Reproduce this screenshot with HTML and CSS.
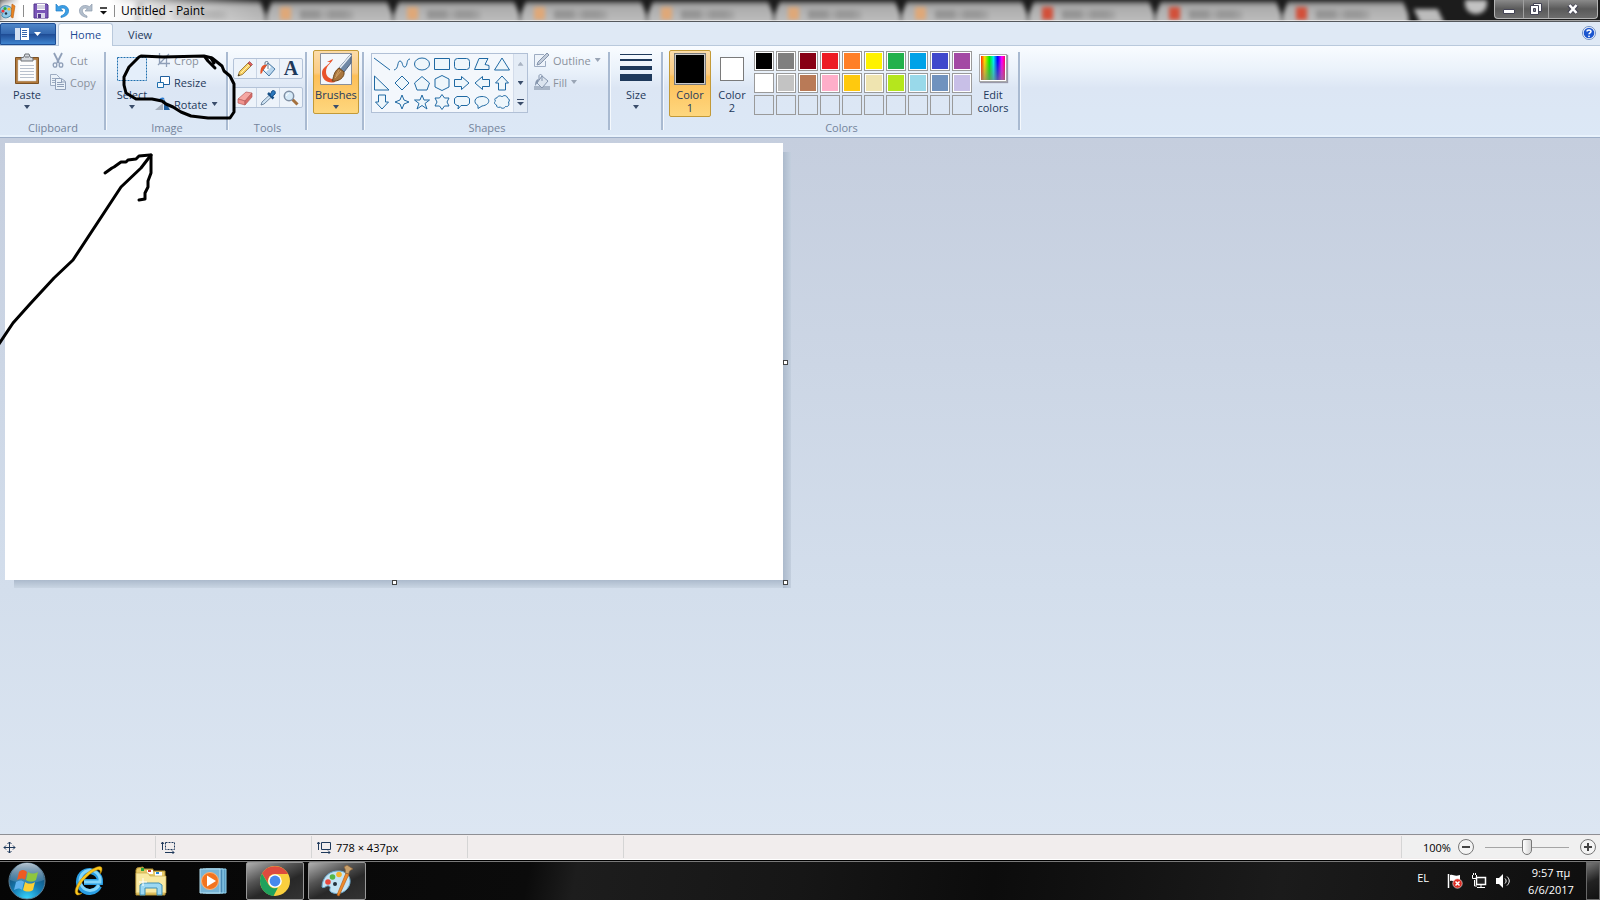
FILE: index.html
```html
<!DOCTYPE html>
<html lang="en">
<head>
  <meta charset="utf-8">
  <meta name="viewport" content="width=device-width, initial-scale=1.0">
  <title>Untitled - Paint</title>
  <link rel="stylesheet" href="styles.css">
</head>
<body>
  <!-- Title bar -->
  <header class="titlebar">
    <div class="glass" aria-hidden="true">
      <i class="tab-behind"></i>
      <i class="tab-behind orange"></i>
      <i class="tab-behind orange"></i>
      <i class="tab-behind orange"></i>
      <i class="tab-behind orange"></i>
      <i class="tab-behind orange"></i>
      <i class="tab-behind orange"></i>
      <i class="tab-behind red"></i>
      <i class="tab-behind red"></i>
      <i class="tab-behind red"></i>
      <i class="new-tab"></i>
      <i class="user-behind"></i>
    </div>
    <div class="quick">
      <svg class="app-icon" width="16" height="16" viewBox="0 0 16 16"><path d="M0 8C0 4 4 2 8 3s6 5 4 8-6 5-9 3 1-3-1-4-2-1-2-2z" fill="#8fc9e8" stroke="#3f86ab"/><circle cx="3" cy="8" r="1.600" fill="#e33"/><circle cx="5" cy="5.500" r="1.600" fill="#3a3"/><circle cx="9" cy="6" r="1.600" fill="#fb2"/><circle cx="6" cy="10.500" r="1.200" fill="#234"/><path d="M12 1l3 2-2 12-2-1z" fill="#e98422" stroke="#b75e12" stroke-width=".6"/></svg>
      <span class="bar"></span>
      <button aria-label="Save"><svg width="16" height="16" viewBox="0 0 16 16"><path d="M1 1h13l1 1v13H1z" fill="#7a55b8" stroke="#53378c"/><path d="M4 1h8v6H4z" fill="#fff"/><path d="M4 3h8M4 5h8" stroke="#a9a4c4"/><path d="M4 10h8v5H4z" fill="#d8d4ea"/><path d="M5 11h3v4H5z" fill="#53378c"/></svg></button>
      <button aria-label="Undo"><svg width="16" height="16" viewBox="0 0 16 16"><path d="M1 1v7h7L5.500 5.700C9 4 11 6 10.500 8.500S8 12 6 13v1.500c5-1 8-3.500 7.500-7.500S8 1 3.500 3.700z" fill="#3b9fe6" stroke="#1f7cc4" stroke-width=".7"/></svg></button>
      <button aria-label="Redo"><svg width="16" height="16" viewBox="0 0 16 16"><path d="M15 1v7H8l2.500-2.300C7 4 5 6 5.500 8.500S8 12 10 13v1.500c-5-1-8-3.500-7.500-7.500S8 1 12.500 3.700z" fill="#b3bfcd" stroke="#8e9bad" stroke-width=".7"/></svg></button>
      <button aria-label="Customize Quick Access Toolbar"><svg width="9" height="8" viewBox="0 0 9 8"><path d="M1 1h7" stroke="#111" stroke-width="1.500"/><path d="M1 4h7L4.500 7.500z" fill="#111"/></svg></button>
      <span class="bar"></span>
      <span class="window-title">Untitled - Paint</span>
    </div>
    <div class="window-buttons">
      <button class="min" aria-label="Minimize"><svg width="14" height="14" viewBox="0 0 14 14"><path d="M1.500 7.500h11v4h-11z" fill="#fff" stroke="#445"/></svg></button>
      <button class="max" aria-label="Restore"><svg width="14" height="14" viewBox="0 0 14 14"><path d="M4.500 1.500h8v8h-8z" fill="#fff" stroke="#445"/><path d="M1.500 3.500h8v9h-8z" fill="#fff" stroke="#445"/><path d="M4.500 6.500h2v3h-2z" fill="#889" stroke="#445"/></svg></button>
      <button class="close" aria-label="Close"><svg width="14" height="14" viewBox="0 0 14 14"><path d="M3 3l8 8M11 3l-8 8" stroke="#445" stroke-width="4.500"/><path d="M3.500 3l7 8M10.500 3l-7 8" stroke="#fff" stroke-width="2.600"/></svg></button>
    </div>
  </header>

  <!-- Ribbon tabs -->
  <nav class="tabs">
    <button class="file-button" aria-label="Paint menu">
      <svg width="14" height="12" viewBox="0 0 14 12"><path d="M0 0h14v12H0z" fill="#fff"/><path d="M5.500 0v12" stroke="#3566ad"/><path d="M7 2.500h5M7 4.500h5M7 6.500h5M7 8.500h5" stroke="#3566ad"/><path d="M0 0h5v12H0z" fill="#d5e1f2"/></svg>
      <svg width="7" height="4" viewBox="0 0 7 4"><path d="M0 0h7L3.500 4z" fill="#fff"/></svg>
    </button>
    <a class="tab active" href="#home">Home</a>
    <a class="tab" href="#view">View</a>
    <button class="help" aria-label="Help"><svg width="14" height="14" viewBox="0 0 14 14"><circle cx="7" cy="7" r="6.500" fill="#fff" stroke="#6b8cc4"/><circle cx="7" cy="7" r="5.300" fill="#1c56cf"/><path d="M5 5.500C5 3.500 9 3.300 9 5.500c0 1.300-2 1.300-2 2.800" fill="none" stroke="#fff" stroke-width="1.500"/><circle cx="7" cy="10.300" r=".9" fill="#fff"/></svg></button>
  </nav>

  <!-- Ribbon -->
  <section class="ribbon" id="home">
    <div class="group clipboard">
      <div class="group-body">
        <button class="big">
          <svg width="26" height="32" viewBox="0 0 26 32"><path d="M1.500 4.500h23v26h-23z" fill="#b0793c" stroke="#7d5122"/><path d="M4 7h18v21H4z" fill="#fdfdfd" stroke="#c9c9c9" stroke-width=".5"/><path d="M6 12.500h14M6 15.500h14M6 18.500h14M6 21.500h14M6 24.500h14" stroke="#b9c1cd"/><path d="M7 8V5l3-1 1-3h4l1 3 3 1v3z" fill="#d5d9de" stroke="#6c7177"/><path d="M11 4h4" stroke="#6c7177"/></svg>
          <span>Paste</span><i class="arrow"></i>
        </button>
        <div class="stack">
          <button class="row disabled"><svg width="16" height="16" viewBox="0 0 16 16"><path d="M4 1l5 10M12 1L7 11" stroke="#8f9fb8" stroke-width="1.800"/><ellipse cx="5" cy="13" rx="1.800" ry="2.200" fill="none" stroke="#8f9fb8" stroke-width="1.300"/><ellipse cx="11" cy="13" rx="1.800" ry="2.200" fill="none" stroke="#8f9fb8" stroke-width="1.300"/></svg>Cut</button>
          <button class="row disabled"><svg width="16" height="16" viewBox="0 0 16 16"><path d="M.5.500h6l3 3v8h-9z" fill="#eaf1f9" stroke="#9dacc2"/><path d="M2 4.500h4M2 6.500h4M2 8.500h4" stroke="#9dacc2"/><path d="M5.500 4.500h6l4 3v8h-10z" fill="#eaf1f9" stroke="#8f9fb8"/><path d="M7 8.500h5M7 10.500h7M7 12.500h7M11.500 5v3H15" stroke="#8f9fb8" fill="none"/></svg>Copy</button>
        </div>
      </div>
      <h2>Clipboard</h2>
    </div>

    <div class="group image">
      <div class="group-body">
        <button class="big">
          <svg width="32" height="32" viewBox="0 0 32 32"><path d="M1.500 4.500h29v23h-29z" fill="#e4eefa" stroke="#1e6fae" stroke-dasharray="2 1"/></svg>
          <span>Select</span><i class="arrow"></i>
        </button>
        <div class="stack">
          <button class="row disabled"><svg width="16" height="16" viewBox="0 0 16 16"><path d="M4.500 1v10.500H15M1 4.500h10.500V15M3 13L14 2" fill="none" stroke="#8f9fb8" stroke-width="1.300"/></svg>Crop</button>
          <button class="row"><svg width="16" height="16" viewBox="0 0 16 16"><path d="M5.500 2.500h9v8h-9z" fill="#fff" stroke="#1f5f9e"/><path d="M2.500 8.500h6v5h-6z" fill="#f2f8fd" stroke="#1e6fae"/></svg>Resize</button>
          <button class="row"><svg width="16" height="16" viewBox="0 0 16 16"><path d="M0 14h8V7z" fill="#a6afbc"/><path d="M9 14V3l6 11z" fill="#1f5fa0"/><path d="M4 5c1-2 3-3 5-2" stroke="#2a7bd0" stroke-width="2" fill="none"/></svg>Rotate<i class="arrow"></i></button>
        </div>
      </div>
      <h2>Image</h2>
    </div>

    <div class="group tools">
      <div class="group-body tool-rows">
        <div class="tool-row">
          <button aria-label="Pencil"><svg width="16" height="16" viewBox="0 0 16 16"><path d="M1 15l1.500-4.500L11 2l3 3-8.500 8.500z" fill="#f6cf62" stroke="#8b6a2a" stroke-width=".8"/><path d="M11 2l1.500-1.500 3 3L14 5z" fill="#e0605c" stroke="#8b3a3a" stroke-width=".6"/><path d="M1 15l.7-2 1.300 1.300z" fill="#222"/><path d="M4 12l8-8" stroke="#fff2b5"/></svg></button>
          <button aria-label="Fill with color"><svg width="16" height="16" viewBox="0 0 16 16"><path d="M8 2l7 6-6 7-6-6z" fill="#b9d6ee" stroke="#4b7ba5"/><path d="M8 3l3 3-5 5-2-2z" fill="#fff"/><path d="M8 8V1.500C8-.2 5-.2 5 2v3" fill="none" stroke="#667a8c"/><path d="M7 4C3 3 0 6 .5 13c2 0 2-4 3.500-5z" fill="#e4552a"/></svg></button>
          <button aria-label="Text" class="letter">A</button>
        </div>
        <div class="tool-row">
          <button aria-label="Eraser"><svg width="16" height="16" viewBox="0 0 16 16"><path d="M1 9l8-7 6 1-7 8z" fill="#f5a7a2" stroke="#b75d5b" stroke-width=".7"/><path d="M1 9l7 2v4l-7-2z" fill="#f0938d" stroke="#b75d5b" stroke-width=".7"/><path d="M8 11l7-8v4l-7 8z" fill="#d76b66" stroke="#b75d5b" stroke-width=".7"/></svg></button>
          <button aria-label="Color picker"><svg width="16" height="16" viewBox="0 0 16 16"><path d="M9.500 5l2 2L4 14l-3 1 1-3z" fill="#cfe4f4" stroke="#56708d" stroke-width=".8"/><path d="M8 3l5.500 5.500" stroke="#174f86" stroke-width="2.500"/><path d="M10 5l2-4c2-1.500 4 .5 3 3l-3.500 3z" fill="#2b78bd" stroke="#174f86"/></svg></button>
          <button aria-label="Magnifier"><svg width="16" height="16" viewBox="0 0 16 16"><path d="M9.500 9.500l5 5" stroke="#a4703d" stroke-width="3"/><circle cx="6" cy="6" r="4.700" fill="#d5e9f7" stroke="#7f8fa3" stroke-width="1.500"/><path d="M3.500 6C3.500 4 5 3.500 6 3.500" stroke="#fff" fill="none"/></svg></button>
        </div>
      </div>
      <h2>Tools</h2>
    </div>

    <div class="group brushes">
      <div class="group-body">
        <button class="big picked">
          <svg width="32" height="32" viewBox="0 0 32 32"><path d="M.5.500h31v31H.5z" fill="#f2f6fb" stroke="#8a8f99"/><path d="M13 6C12 10 6 12 6 19c0 5 5 8 10 7l-1 3C8 31 2 27 2 20c0-6 6-7 8-11L7 9z" fill="#e9532b"/><path d="M31 1v9l-7 9-5-4z" fill="#6f88a6" stroke="#4c5f7a"/><path d="M31 2L20 15" stroke="#e8eff7" stroke-width="1.500"/><path d="M19 15l5 4c1 5-5 10-12 9 2-3 1-9 7-13z" fill="#a9763e" stroke="#71481c"/><path d="M21 18l-6 7M19 17l-3 6" stroke="#d3a468"/></svg>
          <span>Brushes</span><i class="arrow"></i>
        </button>
      </div>
    </div>

    <div class="group shapes">
      <div class="group-body">
        <div class="gallery">
          <div class="shape-grid">
            <button aria-label="Line"><svg viewBox="0 0 16 16"><path d="M0 2l16 12"/></svg></button>
            <button aria-label="Curve"><svg viewBox="0 0 16 16"><path d="M0 14c5-1 3-9 6-9s2 7 5 6 1-8 5-8" fill="none"/></svg></button>
            <button aria-label="Oval"><svg viewBox="0 0 16 16"><ellipse cx="8" cy="8" rx="7.500" ry="6"/></svg></button>
            <button aria-label="Rectangle"><svg viewBox="0 0 16 16"><path d="M.5 2.500h15v11H.5z"/></svg></button>
            <button aria-label="Rounded rectangle"><svg viewBox="0 0 16 16"><rect x=".5" y="2.500" width="15" height="11" rx="3"/></svg></button>
            <button aria-label="Polygon"><svg viewBox="0 0 16 16"><path d="M5 2.500h9l-3 6 4 1v4H.5z"/></svg></button>
            <button aria-label="Triangle"><svg viewBox="0 0 16 16"><path d="M8 2l7.500 12H.5z"/></svg></button>
            <button aria-label="Right triangle"><svg viewBox="0 0 16 16"><path d="M.5 1v14H15z"/></svg></button>
            <button aria-label="Diamond"><svg viewBox="0 0 16 16"><path d="M8 1l7 7-7 7-7-7z"/></svg></button>
            <button aria-label="Pentagon"><svg viewBox="0 0 16 16"><path d="M8 1.500L15.500 8 13 15H3L.5 8z"/></svg></button>
            <button aria-label="Hexagon"><svg viewBox="0 0 16 16"><path d="M8 .5L15 4v8l-7 3.500L1 12V4z"/></svg></button>
            <button aria-label="Right arrow"><svg viewBox="0 0 16 16"><path d="M.5 4.500h7v-3L15 8l-7.500 6.500v-3h-7z"/></svg></button>
            <button aria-label="Left arrow"><svg viewBox="0 0 16 16"><path d="M15.500 4.500h-7v-3L1 8l7.500 6.500v-3h7z"/></svg></button>
            <button aria-label="Up arrow"><svg viewBox="0 0 16 16"><path d="M4.500 15V8h-3L8 1l6.500 7h-3v7z"/></svg></button>
            <button aria-label="Down arrow"><svg viewBox="0 0 16 16"><path d="M4.500 1v7h-3L8 15l6.500-7h-3V1z"/></svg></button>
            <button aria-label="Four-point star"><svg viewBox="0 0 16 16"><path d="M8 1l2 5 5 2-5 2-2 5-2-5-5-2 5-2z"/></svg></button>
            <button aria-label="Five-point star"><svg viewBox="0 0 16 16"><path d="M8 1l2 5h5.500L11 9.500l2 5.500-5-3.500L3 15l2-5.500L.5 6H6z"/></svg></button>
            <button aria-label="Six-point star"><svg viewBox="0 0 16 16"><path d="M8 .5L10.500 4H15l-2 4 2 4h-4.500L8 15.500 5.500 12H1l2-4-2-4h4.500z"/></svg></button>
            <button aria-label="Rounded callout"><svg viewBox="0 0 16 16"><path d="M3 2.500h10l2.500 2v5l-2.500 2H7L4 15l.5-3.500H3l-2.500-2v-5z"/></svg></button>
            <button aria-label="Oval callout"><svg viewBox="0 0 16 16"><path d="M4 11.500C-1 9 0 2.500 8 2.500s10 8 0 9.500l-4 2.500z"/></svg></button>
            <button aria-label="Cloud callout"><svg viewBox="0 0 16 16"><path d="M3 4c0-2 4-3 5-1 1-2 5-2 5.500 1 2 1 2.500 3 1 4 1 3 0 5-3 4.500-1 2-4 2.500-5 .5-3 1-4 0-4-2C0 10 0 8 1.500 7 0 5 1 4 3 4z"/></svg></button>
          </div>
          <div class="gallery-scroll">
            <button aria-label="Scroll up"><i class="arrow up"></i></button>
            <button aria-label="Scroll down"><i class="arrow"></i></button>
            <button aria-label="More shapes"><svg width="7" height="7" viewBox="0 0 7 7"><path d="M0 .5h7" stroke="#3a4d6b"/><path d="M0 3h7L3.500 6.500z" fill="#3a4d6b"/></svg></button>
          </div>
        </div>
        <div class="stack">
          <button class="row disabled"><svg width="16" height="16" viewBox="0 0 16 16"><path d="M10 2.500H.5v12h11V9" fill="#edf3fa" stroke="#9dacc2"/><path d="M3 13l1-3 9-9 2 2-9 9z" fill="#c3cddb" stroke="#8595ad"/></svg>Outline<i class="arrow"></i></button>
          <button class="row disabled"><svg width="16" height="16" viewBox="0 0 16 16"><path d="M0 12h16v4H0z" fill="#a9b6c8"/><path d="M8 2l6 5-6 7-5-5z" fill="#dbe4ef" stroke="#8595ad"/><path d="M8 7V2C8 0 5 0 5 2v3" fill="none" stroke="#8595ad"/><path d="M5 5C2 5 1 8 1 12l3-4z" fill="#8595ad"/></svg>Fill<i class="arrow"></i></button>
        </div>
      </div>
      <h2>Shapes</h2>
    </div>

    <div class="group size">
      <div class="group-body">
        <button class="big">
          <svg width="32" height="32" viewBox="0 0 32 32"><path d="M0 1h32v1H0zM0 6h32v2H0zM0 13h32v4H0zM0 21h32v7H0z" fill="#1e395b"/></svg>
          <span>Size</span><i class="arrow"></i>
        </button>
      </div>
    </div>

    <div class="group colors">
      <div class="group-body">
        <button class="big picked color-slot"><i class="swatch large black"></i><span>Color<br>1</span></button>
        <button class="big color-slot"><i class="swatch medium white"></i><span>Color<br>2</span></button>
        <div class="palette">
          <button class="swatch black" aria-label="Black"></button>
          <button class="swatch gray-50" aria-label="Gray-50%"></button>
          <button class="swatch dark-red" aria-label="Dark red"></button>
          <button class="swatch red" aria-label="Red"></button>
          <button class="swatch orange" aria-label="Orange"></button>
          <button class="swatch yellow" aria-label="Yellow"></button>
          <button class="swatch green" aria-label="Green"></button>
          <button class="swatch turquoise" aria-label="Turquoise"></button>
          <button class="swatch indigo" aria-label="Indigo"></button>
          <button class="swatch purple" aria-label="Purple"></button>
          <button class="swatch white" aria-label="White"></button>
          <button class="swatch gray-25" aria-label="Gray-25%"></button>
          <button class="swatch brown" aria-label="Brown"></button>
          <button class="swatch rose" aria-label="Rose"></button>
          <button class="swatch gold" aria-label="Gold"></button>
          <button class="swatch light-yellow" aria-label="Light yellow"></button>
          <button class="swatch lime" aria-label="Lime"></button>
          <button class="swatch light-turquoise" aria-label="Light turquoise"></button>
          <button class="swatch blue-gray" aria-label="Blue-gray"></button>
          <button class="swatch lavender" aria-label="Lavender"></button>
          <button class="swatch empty" aria-label="Custom 1"></button>
          <button class="swatch empty" aria-label="Custom 2"></button>
          <button class="swatch empty" aria-label="Custom 3"></button>
          <button class="swatch empty" aria-label="Custom 4"></button>
          <button class="swatch empty" aria-label="Custom 5"></button>
          <button class="swatch empty" aria-label="Custom 6"></button>
          <button class="swatch empty" aria-label="Custom 7"></button>
          <button class="swatch empty" aria-label="Custom 8"></button>
          <button class="swatch empty" aria-label="Custom 9"></button>
          <button class="swatch empty" aria-label="Custom 10"></button>
        </div>
        <button class="big edit-colors"><i class="spectrum"></i><span>Edit<br>colors</span></button>
      </div>
      <h2>Colors</h2>
    </div>
  </section>

  <!-- Drawing area -->
  <main class="workspace">
    <div class="canvas">
      <i class="handle right"></i>
      <i class="handle bottom"></i>
      <i class="handle corner"></i>
    </div>
  </main>

  <!-- Status bar -->
  <footer class="status">
    <div class="cell"><svg width="13" height="13" viewBox="0 0 13 13"><path d="M6.500 1v11M1 6.500h11M4.500 3l2-2 2 2M4.500 10l2 2 2-2M3 4.500l-2 2 2 2M10 4.500l2 2-2 2" fill="none" stroke="#1e395b"/></svg></div>
    <div class="cell"><svg width="14" height="13" viewBox="0 0 14 13"><path d="M1.500 9V1M0 3l1.500-2L3 3M4 11.500h9M11 9.500l2 2-2 2" fill="none" stroke="#1e395b"/><path d="M4.500 1.500h9v7h-9z" fill="none" stroke="#1e395b" stroke-dasharray="2 1"/></svg></div>
    <div class="cell"><svg width="14" height="13" viewBox="0 0 14 13"><path d="M1.500 9V1M0 3l1.500-2L3 3M4 11.500h9M11 9.500l2 2-2 2M4.500 1.500h9v7h-9z" fill="none" stroke="#1e395b"/></svg><span>778 × 437px</span></div>
    <div class="cell"></div>
    <div class="cell wide"></div>
    <div class="zoom">
      <label for="zoom">100%</label>
      <button aria-label="Zoom out"><svg width="16" height="16" viewBox="0 0 16 16"><circle cx="8" cy="8" r="7.500" fill="#f4f4f4" stroke="#777"/><path d="M4 8h8" stroke="#444" stroke-width="2"/></svg></button>
      <input type="range" id="zoom" min="0" max="100" value="50">
      <button aria-label="Zoom in"><svg width="16" height="16" viewBox="0 0 16 16"><circle cx="8" cy="8" r="7.500" fill="#f4f4f4" stroke="#777"/><path d="M4 8h8M8 4v8" stroke="#444" stroke-width="2"/></svg></button>
    </div>
  </footer>

  <!-- Taskbar -->
  <div class="taskbar">
    <button class="start" aria-label="Start">
      <svg width="38" height="38" viewBox="0 0 38 38">
        <defs>
          <radialGradient id="orb" cx=".5" cy="1" r=".95"><stop offset="0" stop-color="#39d8ff"/><stop offset=".45" stop-color="#157db5"/><stop offset="1" stop-color="#123a5c"/></radialGradient>
          <linearGradient id="gloss" x2="0" y2="1"><stop offset="0" stop-color="#dfe9f0" stop-opacity=".8"/><stop offset="1" stop-color="#9dbdd2" stop-opacity=".2"/></linearGradient>
        </defs>
        <circle cx="19" cy="19" r="18" fill="url(#orb)" stroke="#5d7f95"/>
        <path d="M2 18a17 17 0 0 1 34 0c-9 4-25 4-34 0z" fill="url(#gloss)"/>
        <path d="M11 10c3-3 6-2 8 0l-2 8c-2-2-5-2-8 0z" fill="#ee5a22"/>
        <path d="M20 10c3 2 6 2 10 0l-2 8c-3 2-7 2-10 0z" fill="#8fc63e"/>
        <path d="M8 20c3-2 6-2 8 0l-2 8c-2-2-5-2-8 0z" fill="#5fb2ee"/>
        <path d="M17 20c3 2 7 2 10 0l-2 8c-3 2-7 2-10 0z" fill="#fdcf35"/>
      </svg>
    </button>
    <button class="task" aria-label="Internet Explorer">
      <svg width="32" height="32" viewBox="0 0 32 32"><path d="M26 21a10.500 10.500 0 1 1 1-4H11" fill="none" stroke="#2a9ee3" stroke-width="6"/><path d="M26 20a10 10 0 1 1 1-3H11" fill="none" stroke="#84d6fa" stroke-width="3"/><path d="M4 30c-5-3 1-14 9-21S29-1 29 4c0 2-1 4-2 5 1-3 0-5-3-4C17 7 6 19 5 25c-1 3 1 4 4 3-2 2-4 2-5 2z" fill="#fbc81e" stroke="#b98308" stroke-width=".5"/></svg>
    </button>
    <button class="task" aria-label="Windows Explorer">
      <svg width="32" height="32" viewBox="0 0 32 32"><path d="M2 3l6-1 1 2h9v2h12v24H1V5z" fill="#e8cb69" stroke="#b08f33"/><path d="M6 3h3v3H6z" fill="#27a53d"/><path d="M12 5h6v4h-6z" fill="#fff"/><path d="M13 5h3v2h-3z" fill="#d5402e"/><path d="M20 7h7v4h-7z" fill="#fff"/><path d="M21 7h3v2h-3z" fill="#2789d8"/><path d="M1 8h12l2 3h16v17H1z" fill="#f9e9a2" stroke="#c9aa4c" stroke-width=".7"/><path d="M5 30V20l3-2h16l3 2v10h-5v-7H10v7z" fill="#9cd8f2" stroke="#3f8fb5"/><path d="M8 13v8M4 17h8" stroke="#fff"/></svg>
    </button>
    <button class="task" aria-label="Windows Media Player">
      <svg width="32" height="32" viewBox="0 0 32 32"><path d="M9 4h20v24H9z" fill="#5b9dc4" stroke="#8fd0ee"/><path d="M6 4h20v24H6z" fill="#4889b4" stroke="#9ad9f4"/><path d="M3 4h20v24H3z" fill="#78b5d6" stroke="#b4e0f3"/><circle cx="13" cy="16" r="8.500" fill="#f2741f" stroke="#fbb57a"/><path d="M10 10.500v11l9-5.500z" fill="#fff"/></svg>
    </button>
    <button class="task open" aria-label="Google Chrome">
      <svg width="32" height="32" viewBox="0 0 32 32"><circle cx="16" cy="16" r="15" fill="#f9cf3e"/><path d="M3 8.500A15 15 0 0 1 29 9H16a7 7 0 0 0-6.500 10z" fill="#dd4b3e"/><path d="M3 8.500l6.500 11A7 7 0 0 0 19 22.500L14.500 31A15 15 0 0 1 3 8.500z" fill="#1fa15d"/><circle cx="16" cy="16" r="6.800" fill="#fff"/><circle cx="16" cy="16" r="5.400" fill="#4789ec"/></svg>
    </button>
    <button class="task open" aria-label="Paint">
      <svg width="32" height="32" viewBox="0 0 32 32"><path d="M1 22C1 12 9 5 19 6c9 1 12 9 9 15-4 8-13 9-18 6-3-2 1-5-2-6s-4 3-7 1z" fill="#c4e4f5" stroke="#6aa8cb"/><circle cx="7" cy="17" r="2.800" fill="#e8483c"/><circle cx="11.500" cy="12" r="2.800" fill="#54b848"/><circle cx="18" cy="9.500" r="2.800" fill="#f7b52c"/><circle cx="14" cy="19" r="2" fill="#23323d"/><path d="M25 8l3 1-10 22-2-1z" fill="#ef8b2c" stroke="#b5601a" stroke-width=".7"/><path d="M23 2l3-2 6 4c-2 1-4 1-4 5l-4-1c1-3 0-4-1-6z" fill="#c9a06b" stroke="#86603a" stroke-width=".7"/></svg>
    </button>

    <div class="tray">
      <span class="lang">EL</span>
      <svg width="16" height="16" viewBox="0 0 16 16"><path d="M1.500 1v14" stroke="#fff" stroke-width="1.500"/><path d="M3 2c4-1 4 2 10 0v6C8 10 7 7 3 8z" fill="#fff"/><circle cx="10.500" cy="10.500" r="4.700" fill="#d92b22" stroke="#fff" stroke-width=".6"/><path d="M8.500 8.500l4 4M12.500 8.500l-4 4" stroke="#fff" stroke-width="1.500"/></svg>
      <svg width="16" height="16" viewBox="0 0 16 16"><path d="M5.500 4.500h9v7h-9z" fill="#222" stroke="#fff" stroke-width="1.500"/><path d="M6 14.500h8M10 12v2M3.500 7v6H6M1.500 2v3.500h4V2M2.500 0v2M4.500 0v2" fill="none" stroke="#fff"/></svg>
      <svg width="16" height="16" viewBox="0 0 16 16"><path d="M1 5h3l4-4v14l-4-4H1z" fill="#fff"/><path d="M10 5.500c1.500 1.500 1.500 3.500 0 5M12 3.500c3 3 3 6 0 9" fill="none" stroke="#fff"/></svg>
      <div class="clock">9:57 πμ<br>6/6/2017</div>
      <button class="show-desktop" aria-label="Show desktop"></button>
    </div>
  </div>

  <!-- Hand-drawn circle and arrow -->
  <svg class="ink" width="240" height="350" viewBox="0 0 240 350">
    <path d="M141 56l22 1 41-1 8 2 10 8 2 5 6 5 4 8v28l-4 6h-22l-17-2-10-4-8-5-7-3-4-3-10-2h-16l-10-6-2-8v-8l5-10 5-5 5-5z"/>
    <path d="M205 57l3 4 7 7M211 58l3 5"/>
    <path d="M-1 344l14-21 17-19 24-26 19-18 48-73 20-19 10-13"/>
    <path d="M150 155l-11 1-3 3-8 1-2 2-5 0-7 5-2 1-7 5M151 155v18l-3 8v6l-3 6v6l-6 1"/>
  </svg>
</body>
</html>
```
FILE: styles.css
```css
* {
  box-sizing: border-box;
}

body {
  margin: 0;
  height: 100vh;
  display: flex;
  flex-direction: column;
  overflow: hidden;
  position: relative;
  font-family: "Open Sans", "Noto Sans", sans-serif;
  font-size: 11px;
  line-height: 13px;
  color: #1e395b;
}

button {
  margin: 0;
  padding: 0;
  border: 0;
  background: none;
  font: inherit;
  color: inherit;
}

svg {
  display: block;
  flex: none;
}

/* Title bar */
.titlebar {
  position: relative;
  height: 22px;
  flex: none;
  display: flex;
  justify-content: space-between;
  overflow: hidden;
  background: #1c1c1c;
  border-bottom: 1px solid #55585c;
}

.titlebar::after {
  content: "";
  position: absolute;
  left: 0;
  right: 0;
  bottom: 0;
  height: 1px;
  background: rgba(255, 255, 255, 0.6);
}

/* Blurred browser tabs seen through the glass */
.glass {
  position: absolute;
  inset: 0;
  display: flex;
  padding-left: 139px;
  filter: blur(2px);
}

.glass::before {
  content: "";
  position: absolute;
  left: 0;
  top: 2px;
  width: 135px;
  height: 24px;
  background: #c4c4c4;
}

.tab-behind {
  position: relative;
  width: 127px;
  height: 26px;
  flex: none;
  background: linear-gradient(#444 0, #aaa 6px, #c2c2c2 26px);
  clip-path: polygon(6px 1px, 121px 1px, 126px 14px, 127px 26px, 0 26px, 1px 14px);
}

.tab-behind::before {
  content: "";
  position: absolute;
  left: 14px;
  top: 7px;
  width: 11px;
  height: 13px;
  background: #8f8a84;
}

.tab-behind::after {
  content: "";
  position: absolute;
  left: 34px;
  top: 10px;
  width: 54px;
  height: 9px;
  background: linear-gradient(90deg, #959595 0 18px, #a8a8a8 22px 26px, #989898 30px 44px, #aaa);
}

.tab-behind.orange::before {
  background: #dfa878;
}

.tab-behind.red::before {
  background: #d2503a;
}

.new-tab {
  width: 24px;
  height: 14px;
  margin: 9px 0 0 8px;
  background: #bcbcbc;
  transform: skewX(25deg);
}

.user-behind {
  width: 22px;
  height: 14px;
  margin-left: 24px;
  background: #c2c2c2;
  border-radius: 0 0 10px 10px;
}

.quick {
  position: relative;
  display: flex;
  align-items: center;
  gap: 6px;
  padding-right: 60px;
  background: linear-gradient(90deg, rgba(255, 255, 255, 0.3) 0, #fff 20px, #fff 110px, rgba(255, 255, 255, 0.4) 190px, rgba(255, 255, 255, 0));
}

.app-icon {
  margin-right: 1px;
}

.bar {
  width: 1px;
  height: 12px;
  background: #8c8c8c;
}

.bar + button {
  margin-left: 3px;
}

.window-title {
  font-size: 12px;
  line-height: 16px;
  color: #000;
}

.window-buttons {
  position: relative;
  display: flex;
  height: 19px;
  margin-right: 2px;
  border: 1px solid #b4b4b4;
  border-top: 0;
  border-radius: 0 0 4px 4px;
  background: linear-gradient(#8a8a8a, #5a5a5a 50%, #6d6d6d);
}

.window-buttons button {
  width: 28px;
  display: flex;
  align-items: center;
  justify-content: center;
}

.window-buttons .max {
  width: 26px;
  border: solid #a0a0a0;
  border-width: 0 1px;
}

.window-buttons .close {
  width: 48px;
}

/* Ribbon tabs */
.tabs {
  height: 24px;
  flex: none;
  display: flex;
  align-items: flex-end;
  background: #dfe9f5;
  border-bottom: 1px solid #b9c9dc;
}

.file-button {
  width: 56px;
  height: 22px;
  align-self: flex-start;
  margin: 1px 2px 0 0;
  display: flex;
  align-items: center;
  justify-content: center;
  gap: 5px;
  border: 1px solid #1d4d94;
  border-radius: 2px 2px 0 0;
  background: linear-gradient(#4f86c8, #3468b0 48%, #1e4a93 50%, #3f84cf);
}

.tab {
  height: 23px;
  padding: 4px 11px 0;
  margin-bottom: -1px;
  border: 1px solid transparent;
  border-bottom: 0;
  border-radius: 3px 3px 0 0;
  color: #1e395b;
  text-decoration: none;
}

.tab.active {
  background: #f9fcff;
  border-color: #b9c9dc;
  color: #1d4a94;
}

.tab + .tab {
  margin-left: 3px;
}

.help {
  margin: 0 4px 5px auto;
}

/* Ribbon */
.ribbon {
  height: 92px;
  flex: none;
  display: flex;
  padding-top: 4px;
  background: linear-gradient(#f9fcff, #e9f1fa 26px, #dce6f4 42px, #dce8f6);
  border-bottom: 1px solid #9eafc8;
  box-shadow: inset 0 -2px 0 #e8f2fc;
}

.group {
  position: relative;
  display: flex;
  flex-direction: column;
}

.group::after {
  content: "";
  position: absolute;
  right: -1px;
  top: 2px;
  width: 2px;
  height: 78px;
  background: #a9bad1;
  border-right: 1px solid #f5f9fd;
}

.group-body {
  display: flex;
  align-items: flex-start;
  height: 70px;
}

.group h2 {
  margin: 1px 0 0;
  font-size: 11px;
  line-height: 13px;
  font-weight: normal;
  text-align: center;
  color: #74849c;
}

.clipboard {
  width: 106px;
}

.clipboard .group-body {
  padding-left: 4px;
}

.image {
  width: 122px;
}

.image .group-body {
  padding-left: 3px;
}

.tools {
  width: 79px;
}

.tools .group-body {
  padding-left: 5px;
}

.brushes {
  width: 57px;
}

.brushes .group-body {
  padding-left: 6px;
}

.shapes {
  width: 246px;
}

.shapes .group-body {
  padding-left: 7px;
}

.size {
  width: 53px;
}

.size .group-body {
  padding-left: 3px;
}

.colors {
  width: 357px;
}

.colors .group-body {
  padding-left: 6px;
}

.big {
  width: 46px;
  height: 64px;
  padding-top: 3px;
  display: flex;
  flex-direction: column;
  align-items: center;
  flex: none;
}

.big span {
  margin-top: 3px;
}

.arrow {
  flex: none;
  width: 6px;
  height: 4px;
  background: #3a4d6b;
  clip-path: polygon(0 0, 100% 0, 50% 100%);
}

.arrow.up {
  background: #a9b3c2;
  clip-path: polygon(50% 0, 100% 100%, 0 100%);
}

.big .arrow {
  margin-top: 4px;
}

.picked {
  padding-top: 2px;
  border: 1px solid #c39a38;
  border-radius: 2px;
  background: linear-gradient(#fbdcaa, #fbcb82 35%, #fdbf58 40%, #fed77e);
}

.stack {
  margin-top: -1px;
}

.row {
  height: 22px;
  padding: 0 4px 0 0;
  display: flex;
  align-items: center;
  gap: 3px;
  white-space: nowrap;
}

.row .arrow {
  margin-left: 1px;
}

.clipboard .row {
  gap: 4px;
}

.disabled {
  color: #8a919c;
}

.disabled .arrow {
  background: #9aa5b5;
}

.tool-rows {
  flex-direction: column;
  padding-top: 8px;
  gap: 8px;
}

.tool-row {
  height: 21px;
  display: flex;
  border: 1px solid #b4c3d8;
  border-radius: 2px;
  background: #edf3fa;
}

.tool-row button {
  width: 22px;
  display: flex;
  align-items: center;
  justify-content: center;
}

.tool-row button + button {
  width: 23px;
  border-left: 1px solid #c8d4e4;
}

.tool-row .letter {
  font-family: "Liberation Serif", serif;
  font-size: 20px;
  font-weight: bold;
}

.gallery {
  margin: 3px 6px 0 0;
  height: 60px;
  display: flex;
  border: 1px solid #b1c0d6;
  background: #f3f7fc;
}

.shape-grid {
  display: grid;
  grid-template-columns: repeat(7, 20px);
  grid-auto-rows: 19px;
  width: 141px;
}

.shape-grid button {
  display: flex;
  align-items: center;
  justify-content: center;
}

.shape-grid svg {
  width: 16px;
  height: 16px;
  fill: #eef6fb;
  stroke: #1f69a3;
  stroke-width: 1;
}

.gallery-scroll {
  width: 14px;
  display: flex;
  flex-direction: column;
  border-left: 1px solid #d3dcea;
  background: #e4ecf6;
}

.gallery-scroll button {
  flex: 1;
  display: flex;
  align-items: center;
  justify-content: center;
}

/* Colors */
.color-slot {
  width: 42px;
  height: 67px;
}

.color-slot + .color-slot {
  padding-top: 7px;
}

.color-slot + .color-slot span {
  margin-top: 7px;
}

.swatch {
  width: 20px;
  height: 20px;
  border: 1px solid #9a9a9a;
  box-shadow: inset 0 0 0 1px #fff;
}

.swatch.large {
  width: 32px;
  height: 32px;
  border-color: #7a7a7a;
  box-shadow: inset 0 0 0 1px #c9c9c9;
}

.swatch.medium {
  width: 24px;
  height: 24px;
  border-color: #7a7a7a;
}

.swatch.empty {
  box-shadow: none;
}

.palette {
  margin: 1px 0 0 1px;
  display: grid;
  grid-template-columns: repeat(10, 20px);
  gap: 2px;
}

.black { background: #000; }
.gray-50 { background: #7f7f7f; }
.dark-red { background: #880015; }
.swatch.red { background: #ed1c24; }
.swatch.orange { background: #ff7f27; }
.yellow { background: #fff200; }
.green { background: #22b14c; }
.turquoise { background: #00a2e8; }
.indigo { background: #3f48cc; }
.purple { background: #a349a4; }
.white { background: #fff; }
.gray-25 { background: #c3c3c3; }
.brown { background: #b97a57; }
.rose { background: #ffaec9; }
.gold { background: #ffc90e; }
.light-yellow { background: #efe4b0; }
.lime { background: #b5e61d; }
.light-turquoise { background: #99d9ea; }
.blue-gray { background: #7092be; }
.lavender { background: #c8bfe7; }

.edit-colors {
  width: 42px;
}

.spectrum {
  width: 28px;
  height: 28px;
  margin: 1px 0 3px;
  border: 1px solid #a8a8a8;
  box-shadow: inset 0 0 0 1px #fff, 1px 1px 1px #99a;
  background: linear-gradient(rgba(128, 128, 128, 0) 20%, rgba(128, 128, 128, 0.7)), linear-gradient(90deg, #f00, #fd0 18%, #0e0 36%, #0ee 52%, #00f 68%, #f0f 84%, #f03);
}

/* Drawing area */
.workspace {
  flex: 1;
  padding: 5px;
  background: linear-gradient(#c5cede, #d3deec 65%, #dce6f2);
}

.canvas {
  position: relative;
  width: 778px;
  height: 437px;
  background: #fff;
}

.canvas::before,
.canvas::after {
  content: "";
  position: absolute;
}

.canvas::before {
  left: 100%;
  top: 9px;
  width: 8px;
  bottom: -8px;
  background: linear-gradient(90deg, #acbacc, #c3cfde);
}

.canvas::after {
  left: 9px;
  right: 0;
  top: 100%;
  height: 8px;
  background: linear-gradient(#acbacc, #c9d5e3);
}

.handle {
  position: absolute;
  z-index: 1;
  width: 5px;
  height: 5px;
  border: 1px solid #444;
  background: #fff;
}

.handle.right {
  left: 100%;
  top: calc(50% - 2px);
}

.handle.bottom {
  left: calc(50% - 2px);
  top: 100%;
}

.handle.corner {
  left: 100%;
  top: 100%;
}

/* Status bar */
.status {
  height: 26px;
  flex: none;
  display: flex;
  padding: 1px 0;
  border-top: 1px solid #8e8f94;
  border-bottom: 1px solid #fff;
  background: #f1eded;
  color: #000;
}

.cell {
  width: 156px;
  padding-left: 5px;
  display: flex;
  align-items: center;
  gap: 5px;
  border-right: 1px solid #d5d5d5;
}

.cell:first-child {
  padding-left: 3px;
}

.cell.wide {
  flex: 1;
}

.zoom {
  width: 198px;
  padding: 0 4px 0 21px;
  display: flex;
  align-items: center;
  justify-content: space-between;
  background: #f0f0f0;
}

.zoom input {
  appearance: none;
  width: 84px;
  height: 16px;
  margin: 0 4px;
  background: linear-gradient(#a5a5a5, #a5a5a5) center / 100% 1px no-repeat;
}

.zoom input::-webkit-slider-thumb {
  appearance: none;
  width: 10px;
  height: 16px;
  border: 1px solid #777;
  border-radius: 2px 2px 5px 5px;
  background: linear-gradient(90deg, #fff, #d5d5d5);
}

/* Taskbar */
.taskbar {
  height: 40px;
  flex: none;
  display: flex;
  align-items: center;
  padding-left: 8px;
  border-top: 1px solid #000;
  background: linear-gradient(100deg, #050505 0, #0b0b0b 33%, #1d1d1d 36%, #161616 50%, #0c0c0c 62%, #1b1b1b 80%, #0e0e0e);
  box-shadow: inset 0 1px 0 #7a7a7a;
}

.start {
  margin-right: 12px;
}

.task {
  width: 58px;
  height: 38px;
  margin: 0 2px;
  display: flex;
  align-items: center;
  justify-content: center;
}

.task.open {
  border: 1px solid #989898;
  border-radius: 2px;
  background: linear-gradient(155deg, #b0b0b0, #555 35%, #282828 60%, #333);
}

.tray {
  margin-left: auto;
  height: 100%;
  display: flex;
  align-items: center;
  gap: 8px;
  color: #fff;
}

.tray .lang {
  margin: 0 10px 6px 0;
}

.clock {
  width: 54px;
  margin-left: 5px;
  font-size: 11px;
  line-height: 17px;
  text-align: center;
}

.show-desktop {
  width: 14px;
  height: 38px;
  border: 1px solid #686868;
  background: linear-gradient(155deg, #777, #222 50%, #111);
}

/* Marker strokes over the window */
.ink {
  position: absolute;
  left: 0;
  top: 0;
  pointer-events: none;
  fill: none;
  stroke: #000;
  stroke-width: 3;
  stroke-linejoin: round;
  stroke-linecap: round;
}
```
